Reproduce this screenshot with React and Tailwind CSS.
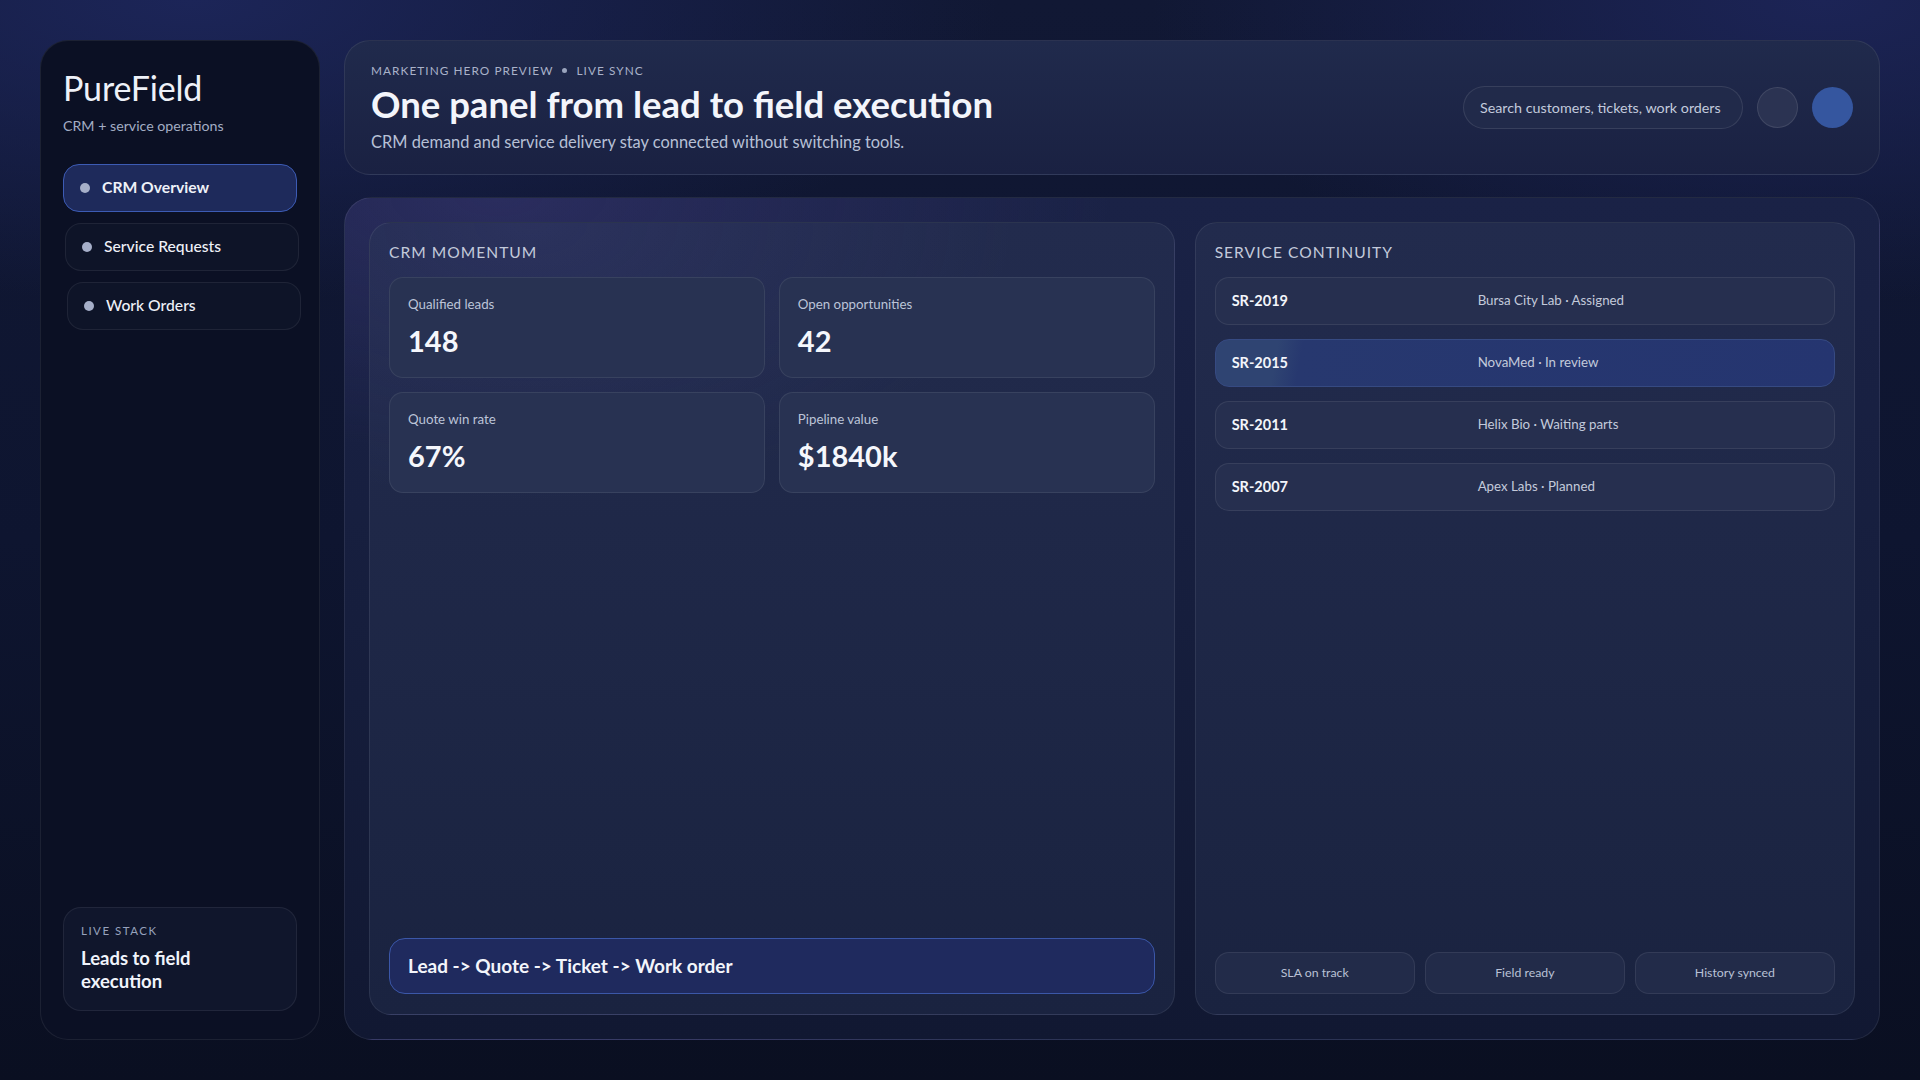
import React from 'react'

const navItems = [
  { label: 'CRM Overview', active: true, shift: '' },
  { label: 'Service Requests', active: false, shift: 'translate-x-[2px]' },
  { label: 'Work Orders', active: false, shift: 'translate-x-[4px]' },
]

const stats = [
  { label: 'Qualified leads', value: '148' },
  { label: 'Open opportunities', value: '42' },
  { label: 'Quote win rate', value: '67%' },
  { label: 'Pipeline value', value: '$1840k' },
]

const requests = [
  { id: 'SR-2019', status: 'Bursa City Lab · Assigned' },
  { id: 'SR-2015', status: 'NovaMed · In review', highlight: true },
  { id: 'SR-2011', status: 'Helix Bio · Waiting parts' },
  { id: 'SR-2007', status: 'Apex Labs · Planned' },
]

const chips = ['SLA on track', 'Field ready', 'History synced']

function Sidebar() {
  return (
    <aside className="w-[280px] shrink-0 rounded-[28px] border border-white/[0.07] bg-[#0b1024] px-[22px] pt-[26px] pb-[28px] flex flex-col">
      <div className="text-[34px] leading-[42px] text-[#eef1f8] tracking-[-0.005em]">PureField</div>
      <div className="mt-[7px] text-[14.2px] leading-5 text-[#a3adc4]">CRM + service operations</div>

      {/* nav */}
      <nav className="mt-[28px] flex flex-col gap-[11px]">
        {navItems.map((item) => (
          <div
            key={item.label}
            className={`${item.shift} h-12 rounded-2xl border flex items-center pl-[16px] gap-3 ${
              item.active
                ? 'bg-[#1e2a5b] border-[#3c5bb4]'
                : 'bg-[#0e1428] border-white/[0.07]'
            }`}
          >
            <span className="w-[10px] h-[10px] rounded-full bg-[#a6afc9]" />
            <span
              className={`text-[15.7px] text-[#eef1f8] ${item.active ? 'font-bold' : 'font-medium'}`}
            >
              {item.label}
            </span>
          </div>
        ))}
      </nav>

      <div className="mt-auto rounded-[18px] border border-white/[0.07] bg-[#10162c] px-[17px] pt-[14px] pb-[17px]">
        <div className="text-[11.5px] tracking-[0.13em] text-[#97a2bd]">LIVE STACK</div>
        <div className="mt-[8px] max-w-[170px] text-[18.5px] leading-[23px] font-bold text-[#f1f4fb]">
          Leads to field execution
        </div>
      </div>
    </aside>
  )
}

function Header() {
  return (
    <header className="h-[135px] shrink-0 rounded-[26px] border border-white/[0.08] bg-[linear-gradient(180deg,#202a4c_0%,#1a2142_100%)] px-[26px] flex items-center justify-between">
      <div>
        <div className="flex items-center gap-[9px] text-[11.8px] leading-4 tracking-[0.09em] text-[#a9b2c9]">
          <span>MARKETING HERO PREVIEW</span>
          <span className="w-[5px] h-[5px] rounded-full bg-[#9aa4bd]" />
          <span>LIVE SYNC</span>
        </div>
        <h1 className="mt-[4px] text-[36.5px] leading-[42px] font-bold text-[#f3f5fb]">
          One panel from lead to field execution
        </h1>
        <p className="mt-[6px] text-[16.4px] leading-[22px] text-[#b7c0d6]">
          CRM demand and service delivery stay connected without switching tools.
        </p>
      </div>
      <div className="flex items-center">
        <div className="h-[43px] w-[280px] rounded-full border border-white/[0.1] bg-[#212a4a] pl-[16px] flex items-center text-[14.3px] text-[#c3cadd]">
          Search customers, tickets, work orders
        </div>
        <div className="ml-[14px] w-[41px] h-[41px] rounded-full border border-white/[0.1] bg-[#2b3352]" />
        <div className="ml-[14px] w-[41px] h-[41px] rounded-full bg-[#35569f]" />
      </div>
    </header>
  )
}

function SectionLabel({ children }) {
  return <div className="text-[15.6px] leading-6 tracking-[0.065em] text-[#c3cadb]">{children}</div>
}

function CrmMomentum() {
  return (
    <section className="rounded-[22px] border border-white/[0.08] bg-[radial-gradient(ellipse_60%_35%_at_20%_0%,rgba(70,70,140,0.25)_0%,transparent_100%),linear-gradient(180deg,#222b4d_0%,#1a2340_100%)] px-[19px] pt-[17px] pb-[20px] flex flex-col">
      <SectionLabel>CRM MOMENTUM</SectionLabel>
      <div className="mt-[13px] grid grid-cols-2 gap-[14px]">
        {stats.map((s) => (
          <div
            key={s.label}
            className="h-[101px] rounded-[14px] border border-white/[0.08] bg-[#283252] px-[18px] pt-[17px]"
          >
            <div className="text-[13.3px] leading-[18px] text-[#bcc4d8]">{s.label}</div>
            <div className="mt-[10px] text-[29px] leading-9 font-bold text-[#f5f7fc]">{s.value}</div>
          </div>
        ))}
      </div>
      <div className="mt-auto h-[56px] rounded-[16px] border border-[#3b57a8] bg-[#1f2a5e] px-[18px] flex items-center text-[19px] font-bold text-[#f3f5fb]">
        Lead -&gt; Quote -&gt; Ticket -&gt; Work order
      </div>
    </section>
  )
}

function ServiceContinuity() {
  return (
    <section className="rounded-[22px] border border-white/[0.08] bg-[linear-gradient(180deg,#222b4d_0%,#1a2340_100%)] px-[19px] pt-[17px] pb-[20px] flex flex-col">
      <SectionLabel>SERVICE CONTINUITY</SectionLabel>
      <div className="mt-[13px] flex flex-col gap-[14px]">
        {requests.map((r) => (
          <div
            key={r.id}
            className={`h-[48px] rounded-[14px] border grid grid-cols-[246px_1fr] items-center px-[16px] ${
              r.highlight
                ? 'border-[#364a82] bg-[linear-gradient(100deg,#2f4472_0%,#2f4472_10%,#27386f_14%,#253570_100%)]'
                : 'border-white/[0.08] bg-[#262f4f]'
            }`}
          >
            <span className="text-[14.5px] font-bold text-[#f3f5fb]">{r.id}</span>
            <span className="text-[13.3px] text-[#c3cadb]">{r.status}</span>
          </div>
        ))}
      </div>
      <div className="mt-auto grid grid-cols-3 gap-[10px]">
        {chips.map((c) => (
          <div
            key={c}
            className="h-[42px] rounded-[14px] border border-white/[0.08] bg-[#222b49] flex items-center justify-center text-[12.3px] text-[#b9c1d5]"
          >
            {c}
          </div>
        ))}
      </div>
    </section>
  )
}

export default function App() {
  return (
    <div className="h-[1080px] w-full overflow-hidden bg-[radial-gradient(ellipse_60%_40%_at_10%_0%,#1c2558_0%,transparent_70%),radial-gradient(ellipse_50%_40%_at_95%_0%,#1c2456_0%,transparent_70%),linear-gradient(180deg,#111834_0%,#0e1530_50%,#0a0f21_100%)] p-10 flex gap-6 font-['Lato',sans-serif]">
      <Sidebar />
      <div className="flex-1 min-w-0 flex flex-col gap-[22px]">
        <Header />
        <main className="flex-1 rounded-[28px] border border-white/[0.08] bg-[radial-gradient(ellipse_40%_30%_at_10%_0%,rgba(80,70,150,0.3)_0%,transparent_100%),linear-gradient(180deg,#1a2246_0%,#161e3d_50%,#111832_100%)] p-6 grid grid-cols-[1.22fr_1fr] gap-5">
          <CrmMomentum />
          <ServiceContinuity />
        </main>
      </div>
    </div>
  )
}
